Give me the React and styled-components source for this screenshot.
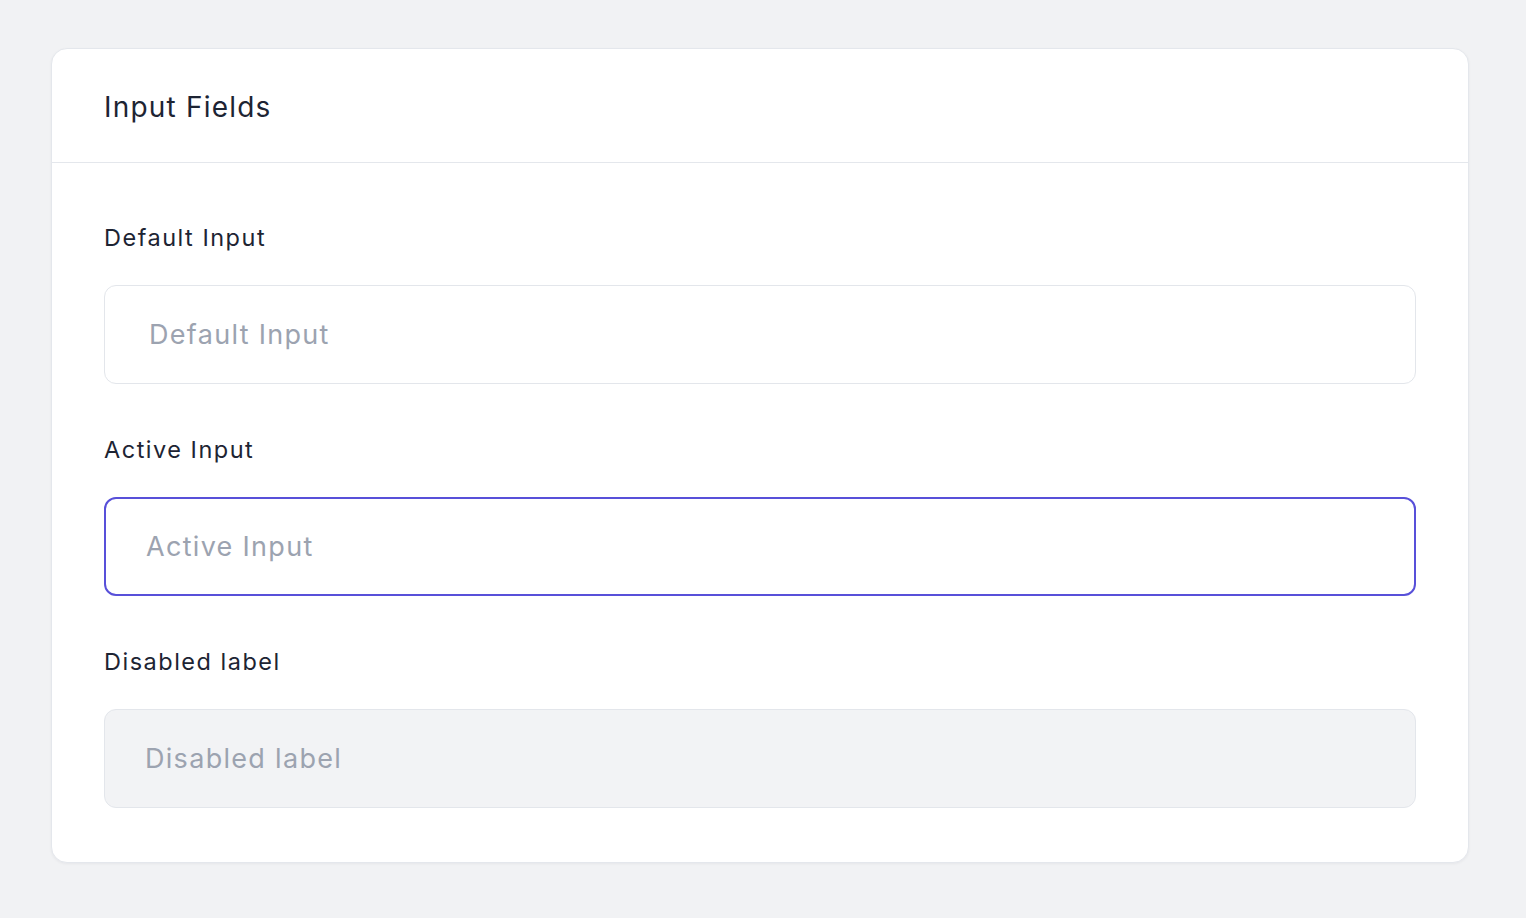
import React from "react";
import styled, { createGlobalStyle } from "styled-components";

const Global = createGlobalStyle`
  html, body { margin: 0; padding: 0; }
  body {
    background: #f1f2f4;
    font-family: Inter, "Noto Sans", sans-serif;
    -webkit-font-smoothing: antialiased;
  }
  * { box-sizing: border-box; }
`;

const Page = styled.div`
  min-height: 918px;
  padding: 48px 57px 56px 51px;
`;

const Card = styled.section`
  background: #ffffff;
  border: 1px solid #e4e7ec;
  border-radius: 16px;
  box-shadow: 0 1px 3px rgba(16, 24, 40, 0.05);
  overflow: hidden;
`;

const Header = styled.header`
  padding: 42px 52px 38px;
  border-bottom: 1px solid #e4e7ec;
`;

const Title = styled.h2`
  margin: 0;
  font-size: 28px;
  line-height: 33px;
  font-weight: 400;
  color: #1d2433;
  letter-spacing: 1.2px;
`;

const Body = styled.div`
  padding: 58px 52px 54px;
  display: flex;
  flex-direction: column;
  gap: 49px;
`;

const Field = styled.div`
  display: flex;
  flex-direction: column;
  gap: 31px;
`;

const Label = styled.label`
  font-size: 23.5px;
  line-height: 33px;
  color: #1d2433;
  font-weight: 400;
  letter-spacing: 1.5px;
`;

const Input = styled.input`
  height: 99px;
  width: 100%;
  border-radius: 12px;
  font-family: inherit;
  font-size: 27px;
  letter-spacing: 1.3px;
  color: #1d2433;
  outline: none;
  border: ${(p) => (p.$active ? "2px solid #5850d9" : "1.5px solid #e3e6eb")};
  padding: 0 ${(p) => (p.$inset ? "40px" : "44px")};
  background: ${(p) => (p.disabled ? "#f2f3f5" : "#ffffff")};
  &::placeholder { color: #9ca3b0; }
  &:disabled { cursor: default; }
`;

export default function App() {
  return (
    <>
      <Global />
      <Page>
        <Card>
          <Header>
            <Title>Input Fields</Title>
          </Header>
          <Body>
            <Field>
              <Label>Default Input</Label>
              <Input placeholder="Default Input" />
            </Field>
            <Field>
              <Label>Active Input</Label>
              <Input $active $inset placeholder="Active Input" />
            </Field>
            <Field>
              <Label>Disabled label</Label>
              <Input disabled $inset placeholder="Disabled label" />
            </Field>
          </Body>
        </Card>
      </Page>
    </>
  );
}
